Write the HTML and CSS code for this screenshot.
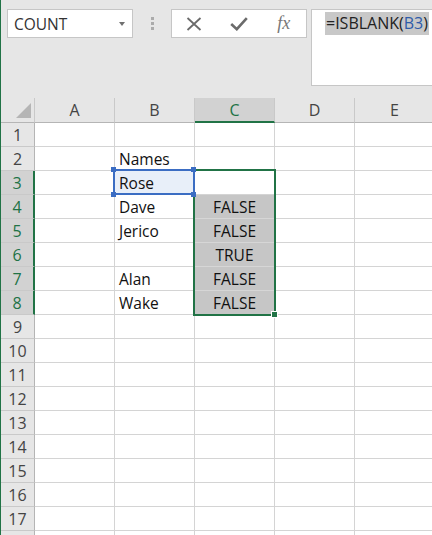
FILE: index.html
```html
<!DOCTYPE html>
<html>
<head>
<meta charset="utf-8">
<link rel="stylesheet" href="styles.css">
</head>
<body>
<div class="app">
  <div class="toolbar">
    <div class="namebox"><span>COUNT</span><span class="caret"></span></div>
    <div class="grip"><i></i><i></i><i></i></div>
    <div class="fbtns">
      <svg width="16" height="14" viewBox="0 0 16 14"><path d="M1.5 1 L14.5 13 M14.5 1 L1.5 13" stroke="#6b6b6b" stroke-width="1.8" fill="none"/></svg>
      <svg width="18" height="14" viewBox="0 0 18 14"><path d="M1.2 7 L6.8 12.2 L16.8 1.2" stroke="#6b6b6b" stroke-width="2.6" fill="none"/></svg>
      <span class="fx">fx</span>
    </div>
    <div class="formula"><span class="hl">=ISBLANK(<span class="ref">B3</span>)</span></div>
  </div>
  <div class="sheet">
    <div class="c h corner"><svg width="34" height="24" viewBox="0 0 34 24"><polygon points="30,5 30,20 15,20" fill="#b5b5b5"/></svg></div>
    <div class="c h colh">A</div>
    <div class="c h colh">B</div>
    <div class="c h colh sel">C</div>
    <div class="c h colh">D</div>
    <div class="c h colh">E</div>

    <div class="c h rowh">1</div><div class="c"></div><div class="c"></div><div class="c"></div><div class="c"></div><div class="c"></div>
    <div class="c h rowh">2</div><div class="c"></div><div class="c">Names</div><div class="c"></div><div class="c"></div><div class="c"></div>
    <div class="c h rowh sel">3</div><div class="c"></div><div class="c refcell">Rose</div><div class="c"></div><div class="c"></div><div class="c"></div>
    <div class="c h rowh sel">4</div><div class="c"></div><div class="c">Dave</div><div class="c v">FALSE</div><div class="c"></div><div class="c"></div>
    <div class="c h rowh sel">5</div><div class="c"></div><div class="c">Jerico</div><div class="c v">FALSE</div><div class="c"></div><div class="c"></div>
    <div class="c h rowh sel">6</div><div class="c"></div><div class="c"></div><div class="c v">TRUE</div><div class="c"></div><div class="c"></div>
    <div class="c h rowh sel">7</div><div class="c"></div><div class="c">Alan</div><div class="c v">FALSE</div><div class="c"></div><div class="c"></div>
    <div class="c h rowh sel">8</div><div class="c"></div><div class="c">Wake</div><div class="c v">FALSE</div><div class="c"></div><div class="c"></div>
    <div class="c h rowh">9</div><div class="c"></div><div class="c"></div><div class="c"></div><div class="c"></div><div class="c"></div>
    <div class="c h rowh">10</div><div class="c"></div><div class="c"></div><div class="c"></div><div class="c"></div><div class="c"></div>
    <div class="c h rowh">11</div><div class="c"></div><div class="c"></div><div class="c"></div><div class="c"></div><div class="c"></div>
    <div class="c h rowh">12</div><div class="c"></div><div class="c"></div><div class="c"></div><div class="c"></div><div class="c"></div>
    <div class="c h rowh">13</div><div class="c"></div><div class="c"></div><div class="c"></div><div class="c"></div><div class="c"></div>
    <div class="c h rowh">14</div><div class="c"></div><div class="c"></div><div class="c"></div><div class="c"></div><div class="c"></div>
    <div class="c h rowh">15</div><div class="c"></div><div class="c"></div><div class="c"></div><div class="c"></div><div class="c"></div>
    <div class="c h rowh">16</div><div class="c"></div><div class="c"></div><div class="c"></div><div class="c"></div><div class="c"></div>
    <div class="c h rowh">17</div><div class="c"></div><div class="c"></div><div class="c"></div><div class="c"></div><div class="c"></div>
    <div class="c h rowh"></div><div class="c"></div><div class="c"></div><div class="c"></div><div class="c"></div><div class="c"></div>

    <div class="selbox"></div>
    <div class="refbox"></div>
    <div class="knob k1"></div>
    <div class="knob k2"></div>
    <div class="knob k3"></div>
    <div class="knob k4"></div>
    <div class="fillhandle"></div>
  </div>
</div>
</body>
</html>
```

FILE: styles.css
```css
* { box-sizing: border-box; }
html, body { margin: 0; padding: 0; }
body {
  width: 432px;
  height: 535px;
  overflow: hidden;
  background: #fff;
  font-family: "Open Sans", "Noto Sans", sans-serif;
}
.app {
  border-left: 1px solid #217346;
  height: 535px;
  overflow: hidden;
}
.toolbar {
  height: 98px;
  background: #e6e6e6;
  display: flex;
  align-items: flex-start;
  padding: 9px 0 0 6px;
}
.namebox {
  width: 126px;
  height: 29px;
  flex: none;
  background: #fff;
  border: 1px solid #c6c6c6;
  display: flex;
  align-items: center;
  justify-content: space-between;
  padding: 0 7px 0 6px;
  font-size: 15.5px;
  color: #333;
}
.caret {
  width: 0;
  height: 0;
  border-left: 3.5px solid transparent;
  border-right: 3.5px solid transparent;
  border-top: 4px solid #707070;
}
.grip {
  flex: none;
  width: 3px;
  margin: 8px 17px 0 18px;
  display: flex;
  flex-direction: column;
  gap: 2px;
}
.grip i {
  display: block;
  width: 3px;
  height: 3px;
  background: #ababab;
}
.fbtns {
  flex: none;
  width: 136px;
  height: 29px;
  background: #fff;
  border: 1px solid #c6c6c6;
  display: grid;
  grid-template-columns: repeat(3, 1fr);
  align-items: center;
  justify-items: center;
}
.fx {
  font-family: "Liberation Serif", "DejaVu Serif", serif;
  font-style: italic;
  font-size: 18px;
  color: #777;
  line-height: 1;
  margin-top: -2px;
}
.formula {
  flex: 1;
  margin-left: 4px;
  margin-right: -10px;
  height: 77px;
  background: #fff;
  border: 1px solid #c6c6c6;
  padding: 2px 0 0 13px;
  font-size: 16px;
  line-height: 23px;
  color: #222;
  white-space: nowrap;
}
.hl {
  background: #c8c8c8;
  display: inline-block;
  padding: 0 1px;
}
.ref { color: #2e5ba8; }

.sheet {
  position: relative;
  display: grid;
  grid-template-columns: 34px repeat(5, 80px);
  grid-template-rows: 25px repeat(18, 24px);
}
.c {
  border-right: 1px solid #d4d4d4;
  border-bottom: 1px solid #d4d4d4;
  font-size: 15.5px;
  color: #111;
  display: flex;
  align-items: center;
  padding-left: 4px;
  white-space: nowrap;
  overflow: hidden;
}
.h {
  background: #e6e6e6;
  color: #444;
  justify-content: center;
  padding: 0;
  font-size: 16px;
}
.colh {
  border-right-color: #c9c9c9;
  border-bottom-color: #b5b5b5;
}
.rowh {
  border-right-color: #b5b5b5;
  border-bottom-color: #c9c9c9;
}
.corner {
  border-right-color: #c9c9c9;
  border-bottom-color: #b5b5b5;
  display: block;
}
.corner svg { display: block; }
.h.sel {
  background: #d2d2d2;
  color: #217346;
}
.colh.sel { border-bottom: 2px solid #217346; }
.rowh.sel { border-right: 2px solid #217346; }
.refcell { background: #e8eff9; }
.v {
  background: #c6c6c6;
  justify-content: center;
  padding: 0;
  border-bottom-color: #d6d6d6;
}

.selbox {
  position: absolute;
  left: 192px;
  top: 71px;
  width: 83px;
  height: 147px;
  border: 2px solid #217346;
}
.refbox {
  position: absolute;
  left: 112px;
  top: 71px;
  width: 82px;
  height: 26px;
  border: 2px solid #3b6dc3;
}
.knob {
  position: absolute;
  width: 5px;
  height: 5px;
  background: #3b6dc3;
}
.k1 { left: 110px; top: 69px; }
.k2 { left: 190px; top: 69px; }
.k3 { left: 110px; top: 94px; }
.k4 { left: 190px; top: 94px; }
.fillhandle {
  position: absolute;
  left: 270px;
  top: 213px;
  width: 7px;
  height: 7px;
  background: #217346;
  border: 1px solid #fff;
}
```
